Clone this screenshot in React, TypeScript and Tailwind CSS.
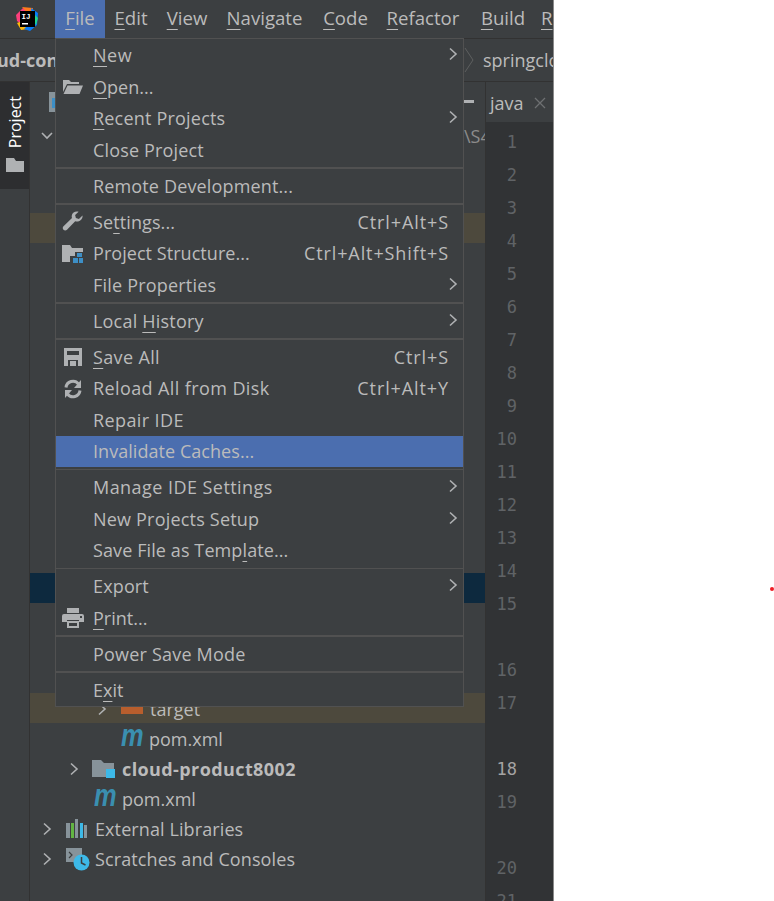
import React from "react";

const F = "font-['Open_Sans','Noto_Sans',sans-serif]";

const U = ({ children }: { children: React.ReactNode }) => (
  <span className="underline decoration-1 underline-offset-[4px]">{children}</span>
);

const Chevron = ({ down = false, className = "" }: { down?: boolean; className?: string }) => (
  <svg width="12" height="14" viewBox="0 0 12 14" className={className} fill="none" stroke="#afb1b3" strokeWidth="1.6">
    {down ? <path d="M1 4l5 5 5-5" /> : <path d="M3 1.5L9 7l-6 5.5" />}
  </svg>
);

const FolderOpen = () => (
  <svg width="22" height="16" viewBox="0 0 22 16">
    <path d="M1 1h6l2 2h8v2H5L1 13z" fill="#afb1b3" />
    <path d="M5.5 6.5H21L17.5 15H1.5z" fill="#afb1b3" />
  </svg>
);
const Wrench = () => (
  <svg width="22" height="22" viewBox="0 0 22 22">
    <path d="M20.5 4.5l-3.6 3.4-3-.8-.8-3 3.5-3.4c-3-.9-6.300.7-6.800 3.700-.2 1-.1 1.900.2 2.700L1.500 15.300c-1 1-1 2.600 0 3.500.9 1 2.500 1 3.500 0l8.200-8.500c.9.300 1.900.4 2.900.2 3-.6 4.900-3.300 4.400-6z" fill="#afb1b3" />
  </svg>
);
const ProjectStructure = () => (
  <svg width="22" height="20" viewBox="0 0 22 20">
    <path d="M0 1h8l2 3h11v4h-8v4H8v6H0z" fill="#afb1b3" />
    <rect x="15" y="9" width="5" height="4" fill="#3d8fc6" />
    <rect x="11" y="14" width="5" height="5" fill="#3d8fc6" />
    <rect x="17" y="14" width="4" height="5" fill="#3d8fc6" />
  </svg>
);
const Save = () => (
  <svg width="18" height="18" viewBox="0 0 18 18">
    <path d="M0 0h18v18H0z" fill="#afb1b3" />
    <rect x="3" y="3" width="12" height="4" fill="#3c3f41" />
    <rect x="4" y="12" width="10" height="6" fill="#3c3f41" />
    <rect x="6" y="13" width="6" height="5" fill="#afb1b3" />
  </svg>
);
const Reload = () => (
  <svg width="20" height="20" viewBox="0 0 20 20" fill="none">
    <path d="M3 8.500A7 7 0 0 1 15.500 5" stroke="#afb1b3" strokeWidth="3" />
    <path d="M18 1v8h-7z" fill="#afb1b3" />
    <path d="M17 11.500A7 7 0 0 1 4.500 15" stroke="#afb1b3" strokeWidth="3" />
    <path d="M2 19v-8h7z" fill="#afb1b3" />
  </svg>
);
const Printer = () => (
  <svg width="22" height="20" viewBox="0 0 22 20">
    <rect x="5" y="0" width="12" height="5" fill="#afb1b3" />
    <path d="M2 6h18q2 0 2 2v6h-5v-2H5v2H0V8q0-2 2-2z" fill="#afb1b3" />
    <rect x="18" y="8" width="2" height="2" fill="#3c3f41" />
    <path d="M5 13h12v7H5zM7 15v3h8v-3z" fill="#afb1b3" fillRule="evenodd" />
  </svg>
);

const Logo = () => (
  <svg width="24" height="24" viewBox="0 0 24 24">
    <path d="M1 8L8 1l5 2-7 14-4-3z" fill="#fc3f7c" />
    <path d="M7 0l11 1-2 9z" fill="#fe7b1c" />
    <path d="M2 16l4 7 7-1-6-8z" fill="#fdb60d" />
    <path d="M16 1l7 5-1 12-7 6-6-2 8-8z" fill="#087cfa" />
    <path d="M19 7l4 4-2 7-3-4z" fill="#21d789" />
    <rect x="5" y="4" width="15" height="16" fill="#000" />
    <text x="6.500" y="11.500" fill="#fff" fontSize="7.500" fontWeight="700" fontFamily="'Liberation Mono',monospace">IJ</text>
    <rect x="7" y="16" width="6" height="1.500" fill="#fff" />
  </svg>
);

const PomIcon = () => (
  <span className="w-[22px] text-[31px] leading-none font-bold italic text-[#3a8fb0] font-['Liberation_Sans',sans-serif] -mt-[7px] origin-left scale-x-[0.82]">m</span>
);

type Item = { label?: React.ReactNode; shortcut?: string; arrow?: boolean; icon?: React.ReactNode; active?: boolean; sep?: boolean; t?: string };

const items: Item[] = [
  { label: <><U>N</U>ew</>, arrow: true, t: "tracking-[0.5px]" },
  { label: <><U>O</U>pen...</>, icon: <FolderOpen /> },
  { label: <><U>R</U>ecent Projects</>, arrow: true, t: "tracking-[0.2px]" },
  { label: "Close Project", t: "tracking-[0.15px]" },
  { sep: true },
  { label: "Remote Development...", t: "tracking-[0.15px]" },
  { sep: true },
  { label: <>Se<U>t</U>tings...</>, shortcut: "Ctrl+Alt+S", icon: <Wrench />, t: "tracking-[0.1px]" },
  { label: "Project Structure...", shortcut: "Ctrl+Alt+Shift+S", icon: <ProjectStructure />, t: "tracking-[0.05px]" },
  { label: "File Properties", arrow: true, t: "tracking-[0.2px]" },
  { sep: true },
  { label: <>Local <U>H</U>istory</>, arrow: true, t: "tracking-[0.2px]" },
  { sep: true },
  { label: <><U>S</U>ave All</>, shortcut: "Ctrl+S", icon: <Save />, t: "tracking-[0.35px]" },
  { label: "Reload All from Disk", shortcut: "Ctrl+Alt+Y", icon: <Reload />, t: "tracking-[0.4px]" },
  { label: "Repair IDE", t: "tracking-[0.4px]" },
  { label: "Invalidate Caches...", active: true, t: "tracking-[0.05px]" },
  { sep: true },
  { label: "Manage IDE Settings", arrow: true, t: "tracking-[0.45px]" },
  { label: "New Projects Setup", arrow: true, t: "tracking-[0.2px]" },
  { label: <>Save File as Temp<U>l</U>ate...</>, t: "tracking-[0.1px]" },
  { sep: true },
  { label: "Export", arrow: true, t: "tracking-[0.15px]" },
  { label: <><U>P</U>rint...</>, icon: <Printer /> },
  { sep: true },
  { label: "Power Save Mode", t: "tracking-[0.2px]" },
  { sep: true },
  { label: <>E<U>x</U>it</> },
];

const menuBar: { label: React.ReactNode; w: string; active?: boolean }[] = [
  { label: <><U>F</U>ile</>, w: "w-[50px]", active: true },
  { label: <><U>E</U>dit</>, w: "w-[52px]" },
  { label: <><U>V</U>iew</>, w: "w-[60px]" },
  { label: <><U>N</U>avigate</>, w: "w-[95px]" },
  { label: <><U>C</U>ode</>, w: "w-[67px]" },
  { label: <><U>R</U>efactor</>, w: "w-[88px]" },
  { label: <><U>B</U>uild</>, w: "w-[72px]" },
  { label: <><U>R</U>un</>, w: "w-[50px] justify-start pl-[2px]" },
];

const lineNumbers: { n: number; h: string; bright?: boolean }[] = [
  ...Array.from({ length: 14 }, (_, i) => ({ n: i + 1, h: "h-[33px]" })),
  { n: 15, h: "h-[66px]" },
  { n: 16, h: "h-[33px]" },
  { n: 17, h: "h-[66px]" },
  { n: 18, h: "h-[33px]", bright: true },
  { n: 19, h: "h-[66px]" },
  { n: 20, h: "h-[33px]" },
  { n: 21, h: "h-[33px]" },
];

export default function App() {
  return (
    <div className={`relative w-[774px] h-[901px] overflow-hidden bg-white flex ${F}`}>
      <div className="w-[554px] h-full shrink-0 flex flex-col bg-[#3c3f41] border-r border-[#8a8a8a] text-[#bbbbbb] text-[18px]">
        {/* title bar */}
        <div className="h-[38px] shrink-0 flex items-stretch overflow-hidden text-[18.6px]">
          <div className="w-[55px] shrink-0 flex items-center pl-[15px] pb-[1px]"><Logo /></div>
          {menuBar.map((m, i) => (
            <div key={i} className={`${m.w} shrink-0 flex items-center justify-center pb-[2px] ${m.active ? "bg-[#4b6eaf]" : ""}`}>{m.label}</div>
          ))}
        </div>
        {/* breadcrumb */}
        <div className="h-[44px] shrink-0 flex items-center justify-between border-t border-b border-[#323232] overflow-hidden">
          <span className="font-bold -ml-[3px]">ud-con</span>
          <div className="flex items-center w-[90px] shrink-0 gap-[8px] whitespace-nowrap">
            <svg width="12" height="28" viewBox="0 0 12 28" fill="none" stroke="#5e6060" strokeWidth="1" className="shrink-0"><path d="M2 2l8 12-8 12" /></svg>
            <span>springcloud</span>
          </div>
        </div>
        {/* body */}
        <div className="flex-1 flex min-h-0">
          <div className="w-[30px] shrink-0 border-r border-[#323232]">
            <div className="h-[107px] bg-[#2d2e30] flex flex-col items-center pt-[14px] gap-[10px]">
              <span className="text-white text-[16px] leading-none [writing-mode:vertical-rl] rotate-180">Project</span>
              <svg width="18" height="14" viewBox="0 0 18 14"><path d="M0 0h8l2 3h8v11H0z" fill="#afb1b3" /></svg>
            </div>
          </div>
          <div className="w-[455px] shrink-0 flex flex-col relative">
            <div className="h-[39px] shrink-0 flex items-center pl-[19px] justify-between">
              <svg width="14" height="20" viewBox="0 0 14 20"><rect width="14" height="20" fill="#87939a" /><rect x="3" y="6" width="11" height="10" fill="#3d8fc6" /></svg>
              <span className="w-[10px] h-[3px] bg-[#afb1b3] mr-[11px]" />
            </div>
            <div className="h-[30px] shrink-0 flex items-center pl-[11px] justify-between">
              <Chevron down />
              <span className="text-[#8c8c8c] w-[21px] overflow-hidden whitespace-nowrap">\S4</span>
            </div>
            <div className="h-[62px] shrink-0" />
            <div className="h-[30px] shrink-0 bg-[#4d493d]" />
            <div className="h-[330px] shrink-0" />
            <div className="h-[30px] shrink-0 bg-[#0d293e]" />
            <div className="h-[90px] shrink-0" />
            <div className="h-[30px] shrink-0 bg-[#4d493d] flex items-center pl-[66px] pt-[2px] gap-[13px]">
              <Chevron />
              <span className="w-[22px] h-[10px] bg-[#b85e2d]" />
              <span className="-ml-[6px]">target</span>
            </div>
            <div className="h-[30px] shrink-0 flex items-center pl-[91px] pt-[2px] gap-[6px]"><PomIcon /><span>pom.xml</span></div>
            <div className="h-[30px] shrink-0 flex items-center pl-[38px] pt-[2px] gap-[12px]">
              <Chevron />
              <svg width="24" height="20" viewBox="0 0 24 20" className="-mr-[6px]">
                <path d="M0 1h9l3 3h10v9h-6v5H0z" fill="#87939a" />
                <rect x="14" y="10" width="9" height="9" fill="#3db9e8" />
              </svg>
              <span className="font-bold tracking-[0.4px]">cloud-product8002</span>
            </div>
            <div className="h-[30px] shrink-0 flex items-center pl-[64px] pt-[2px] gap-[6px]"><PomIcon /><span>pom.xml</span></div>
            <div className="h-[30px] shrink-0 flex items-center pl-[11px] pt-[2px] gap-[13px]">
              <Chevron />
              <svg width="22" height="20" viewBox="0 0 22 20" className="-mr-[6px]">
                <rect x="0" y="4" width="4" height="15" fill="#87939a" />
                <rect x="5" y="4" width="3" height="15" fill="#62b543" />
                <rect x="9" y="0" width="3" height="19" fill="#87939a" />
                <rect x="14" y="4" width="3" height="15" fill="#3db9e8" />
                <rect x="18" y="6" width="3" height="13" fill="#87939a" />
              </svg>
              <span className="tracking-[0.1px]">External Libraries</span>
            </div>
            <div className="h-[30px] shrink-0 flex items-center pl-[11px] pt-[2px] gap-[13px]">
              <Chevron />
              <svg width="24" height="24" viewBox="0 0 24 24" className="-mr-[8px]">
                <path d="M0 1h16v14H0z" fill="#87939a" />
                <path d="M3 5l3 3-3 3" stroke="#3c3f41" strokeWidth="1.200" fill="none" />
                <circle cx="15.500" cy="15.500" r="8" fill="#3db9e8" />
                <path d="M15.500 10v6l4 2" stroke="#3c3f41" strokeWidth="1.500" fill="none" />
              </svg>
              <span className="tracking-[0.1px]">Scratches and Consoles</span>
            </div>
          </div>
          {/* editor */}
          <div className="flex-1 flex flex-col border-l border-[#323232] min-w-0">
            <div className="h-[40px] shrink-0 flex items-center pl-[4px] pt-[2px] gap-[10px] text-[18px]">
              <span>java</span>
              <svg width="12" height="12" viewBox="0 0 12 12" stroke="#6e7072" strokeWidth="1.300"><path d="M1 1l10 10M11 1L1 11" /></svg>
            </div>
            <div className="flex-1 bg-[#313335] pt-[4px] font-['DejaVu_Sans_Mono',monospace] text-[17px] overflow-hidden">
              {lineNumbers.map((l) => (
                <div key={l.n} className={`${l.h} leading-[33px] w-[31px] text-right ${l.bright ? "text-[#a4a3a3]" : "text-[#606366]"}`}>{l.n}</div>
              ))}
            </div>
          </div>
        </div>
      </div>

      {/* File menu overlay */}
      <div className="absolute left-[55px] top-[38px] w-[409px] h-[669px] bg-[#3c3f41] border border-[#515151] pt-[0.75px] text-[#bbbbbb] text-[18px]">
        {items.map((it, i) =>
          it.sep ? (
            <div key={i} className="h-[4.5px] flex items-center"><div className="w-full h-[1.5px] bg-[#515151]" /></div>
          ) : (
            <div key={i} className={`h-[31.5px] relative flex items-center pl-[37px] pr-[15px] ${it.active ? "bg-[#4b6eaf]" : ""}`}>
              {it.icon && <span className="absolute left-[5px] top-0 bottom-0 w-[24px] flex items-center justify-center">{it.icon}</span>}
              <span className={`flex-1 whitespace-nowrap ${it.t ?? ""}`}>{it.label}</span>
              {it.shortcut && <span className="whitespace-nowrap tracking-[0.9px] -mr-[1px]">{it.shortcut}</span>}
              {it.arrow && <Chevron className="-mr-[11px] -mt-[3px]" />}
            </div>
          )
        )}
      </div>

      <span className="absolute left-[770px] top-[587px] w-[4px] h-[4px] rounded-full bg-[#ee1c25]" />
    </div>
  );
}
